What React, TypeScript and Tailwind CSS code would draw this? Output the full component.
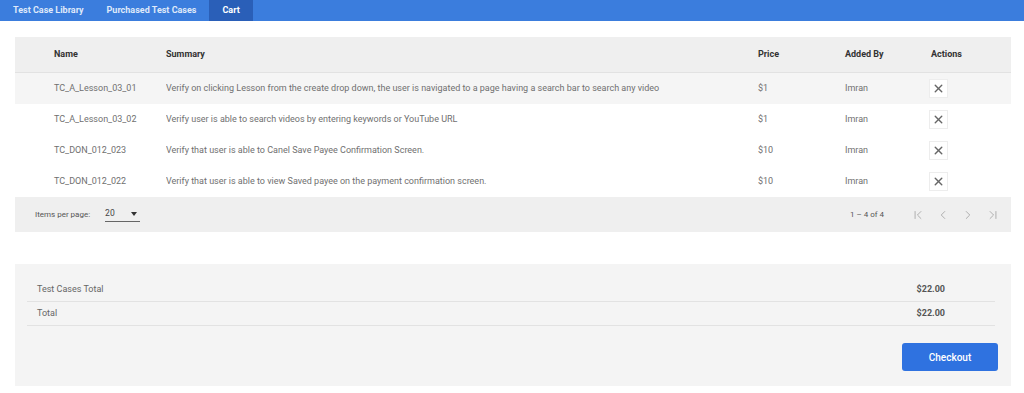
import { X, ChevronLeft, ChevronRight, ChevronFirst, ChevronLast } from 'lucide-react';

const ROWS = [
  {
    name: 'TC_A_Lesson_03_01',
    summary:
      'Verify on clicking Lesson from the create drop down, the user is navigated to a page having a search bar to search any video',
    price: '$1',
    by: 'Imran',
  },
  {
    name: 'TC_A_Lesson_03_02',
    summary: 'Verify user is able to search videos by entering keywords or YouTube URL',
    price: '$1',
    by: 'Imran',
  },
  {
    name: 'TC_DON_012_023',
    summary: 'Verify that user is able to Canel Save Payee Confirmation Screen.',
    price: '$10',
    by: 'Imran',
  },
  {
    name: 'TC_DON_012_022',
    summary: 'Verify that user is able to view Saved payee on the payment confirmation screen.',
    price: '$10',
    by: 'Imran',
  },
];

export default function App() {
  return (
    <div
      className="w-[1024px] h-[393px] overflow-hidden bg-white"
      style={{ fontFamily: 'Roboto, "Liberation Sans", sans-serif' }}
    >
      {/* nav */}
      <div className="flex h-[21px] bg-[#3b7ddd] text-[9px] font-bold">
        <div className="flex items-center pl-[13px] pr-[11px] text-[#dfe9fa]">Test Case Library</div>
        <div className="flex items-center pl-[12px] pr-[13px] text-[#dfe9fa]">Purchased Test Cases</div>
        <div className="flex items-center bg-[#2a5fb8] px-[13px] text-white">Cart</div>
      </div>

      <div className="px-[15px] pt-[16px] pr-[13px]">
        {/* table */}
        <div className="w-full">
          <div className="grid h-[36px] grid-cols-[112px_592px_87px_86px_1fr] items-center border-b border-[#e2e2e2] bg-[#efefef] pl-[39px] text-[9px] font-bold text-[#333]">
            <div>Name</div>
            <div>Summary</div>
            <div>Price</div>
            <div>Added By</div>
            <div>Actions</div>
          </div>
          {ROWS.map((r, i) => (
            <div
              key={r.name}
              className={`grid h-[31px] grid-cols-[112px_592px_87px_86px_1fr] items-center pl-[39px] text-[9px] text-[#707070] ${
                i === 0 ? 'bg-[#f5f5f5]' : 'bg-white'
              }`}
            >
              <div>{r.name}</div>
              <div className="truncate">{r.summary}</div>
              <div>{r.price}</div>
              <div>{r.by}</div>
              <div>
                <div className="-ml-[2px] flex h-[19px] w-[19px] items-center justify-center border border-[#ededed] bg-white">
                  <X className="h-[13px] w-[13px] text-[#666]" strokeWidth={2.6} />
                </div>
              </div>
            </div>
          ))}
          <div className="flex h-[35px] items-center bg-[#efefef] pl-[20px] pr-[11px] text-[8px] text-[#555]">
            <span>Items per page:</span>
            <div className="ml-[15px] flex h-[14px] w-[35px] items-center justify-between border-b border-[#666] pb-[1px] text-[8.5px] text-[#444]">
              <span>20</span>
              <span className="mr-[3px] h-0 w-0 border-x-[3px] border-t-[4px] border-x-transparent border-t-[#333]" />
            </div>
            <div className="ml-auto mr-[27px]">1 – 4 of 4</div>
            <div className="flex items-center gap-[11px] text-[#aaa]">
              <ChevronFirst className="h-[14px] w-[14px]" strokeWidth={1.6} />
              <ChevronLeft className="h-[14px] w-[14px]" strokeWidth={1.6} />
              <ChevronRight className="h-[14px] w-[14px]" strokeWidth={1.6} />
              <ChevronLast className="h-[14px] w-[14px]" strokeWidth={1.6} />
            </div>
          </div>
        </div>

        {/* totals */}
        <div className="mt-[32px] h-[122px] bg-[#f4f4f4] pl-[12px] pr-[16px] pt-[14px]">
          <div className="flex h-[24px] items-center justify-between border-b border-[#e2e2e2] pl-[10px] pr-[50px] text-[9px] text-[#666]">
            <span>Test Cases Total</span>
            <span className="font-bold text-[#555]">$22.00</span>
          </div>
          <div className="flex h-[24px] items-center justify-between border-b border-[#e2e2e2] pl-[10px] pr-[50px] text-[9px] text-[#666]">
            <span>Total</span>
            <span className="font-bold text-[#555]">$22.00</span>
          </div>
          <div className="-mr-[3px] mt-[17px] flex justify-end">
            <button
              type="button"
              className="h-[28px] w-[96px] rounded-[3px] bg-[#2f72e0] text-[10px] font-medium text-white"
            >
              Checkout
            </button>
          </div>
        </div>
      </div>
    </div>
  );
}
